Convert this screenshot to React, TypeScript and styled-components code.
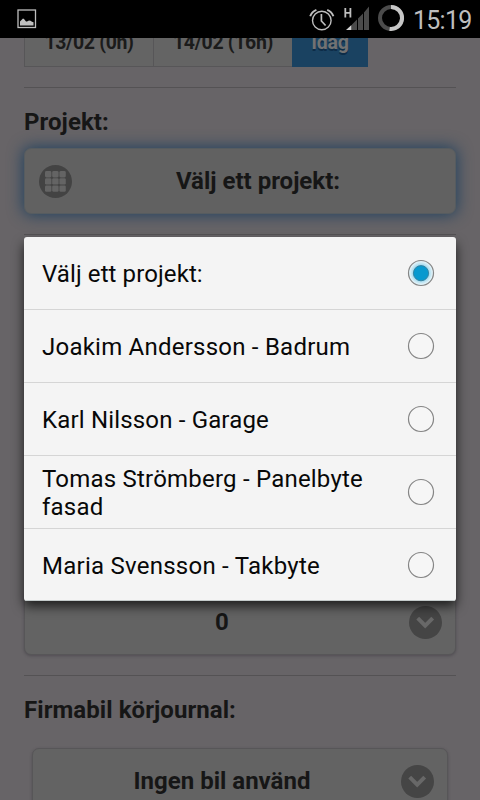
import React from "react";
import styled, { createGlobalStyle } from "styled-components";

const Global = createGlobalStyle`
  * { box-sizing: border-box; }
  html, body { margin: 0; background: #676467; }
  body { font-family: Roboto, "Liberation Sans", sans-serif; }
`;

const Screen = styled.div`
  position: relative;
  width: 480px;
  height: 800px;
  overflow: hidden;
  display: flex;
  flex-direction: column;
  background: #676467;
  color: #161616;
`;

const StatusBar = styled.header`
  flex: 0 0 38px;
  display: flex;
  align-items: center;
  justify-content: space-between;
  padding: 0 9px 0 17px;
  background: #000;
  color: #bebebe;
`;

const StatusIcons = styled.div`
  display: flex;
  align-items: center;
  svg { display: block; }
`;

const Clock = styled.span`
  margin-left: 8px;
  padding-top: 3px;
  width: 58px;
  font-size: 25px;
  line-height: 35px;
  letter-spacing: -0.75px;
  white-space: nowrap;
`;

const Page = styled.main`
  flex: 1;
  min-height: 0;
  overflow: hidden;
  padding: 0 24px;
`;

const Tabs = styled.nav`
  display: flex;
  height: 65px;
  margin-top: -36px;
`;

const Tab = styled.div<{ $width: number; $active?: boolean }>`
  width: ${(p) => p.$width}px;
  padding-top: 28px;
  text-align: center;
  font-size: 19.5px;
  line-height: 24px;
  font-weight: 700;
  letter-spacing: ${(p) => (p.$active ? "-0.2px" : "-0.35px")};
  background: ${(p) => (p.$active ? "#1a4261" : "#646464")};
  color: ${(p) => (p.$active ? "#727272" : "#1b1b1b")};
  border: solid ${(p) => (p.$active ? "#1a4261" : "#575658")};
  border-width: 1px 0 1px ${(p) => (p.$active ? "0" : "1px")};
  text-shadow: ${(p) => (p.$active ? "0 2px 0 #0d2c48" : "none")};
`;

const Divider = styled.div<{ $top: number }>`
  height: 1px;
  margin-top: ${(p) => p.$top}px;
  background: #545254;
`;

const Heading = styled.h2<{ $top: number; $spacing: number }>`
  margin: ${(p) => p.$top}px 0 0;
  height: 28px;
  font-size: 24px;
  line-height: 28px;
  font-weight: 700;
  letter-spacing: ${(p) => p.$spacing}px;
`;

const Field = styled.div<{ $top: number; $inset?: number; $focused?: boolean }>`
  display: grid;
  grid-template-columns: 48px 1fr 48px;
  align-items: center;
  height: 66px;
  margin: ${(p) => p.$top}px ${(p) => p.$inset ?? 0}px 0;
  border: 1px solid ${(p) => (p.$focused ? "#565c60" : "#575658")};
  border-radius: 7px;
  background: ${(p) => (p.$focused ? "#616161" : "#636363")};
  box-shadow: ${(p) => (p.$focused ? "0 0 15px 1px #20415f" : "0 1px 3px rgba(40, 35, 45, 0.35)")};
  svg { display: block; }
`;

const Value = styled.span<{ $left?: number; $right?: number }>`
  grid-column: 2;
  padding: 0 ${(p) => p.$right ?? 0}px 0 ${(p) => p.$left ?? 0}px;
  font-size: 24px;
  line-height: 28px;
  font-weight: 700;
  text-align: center;
  white-space: nowrap;
`;

const LeadingIcon = styled.span`
  margin-left: 14px;
`;

const TrailingIcon = styled.span`
  grid-column: 3;
  padding-left: 2px;
`;

const Dialog = styled.section`
  position: absolute;
  left: 24px;
  top: 237px;
  width: 432px;
  height: 364px;
  overflow: hidden;
  border-radius: 3px;
  background: #f4f4f4;
  color: #080808;
`;

const DialogShadow = styled.div`
  position: absolute;
  left: 24px;
  top: 239px;
  width: 432px;
  height: 362px;
  border-radius: 3px;
  box-shadow: 0 5px 12px rgba(0, 0, 0, 0.72);
`;

const Option = styled.div`
  display: flex;
  align-items: center;
  justify-content: space-between;
  height: 73px;
  padding: 1px 21px 0 18px;
  border-bottom: 1px solid #d5d5d5;
  &:last-child { height: 72px; padding-top: 2px; border-bottom-color: #c4cbcb; }
`;

const OptionText = styled.span<{ $spacing: number }>`
  width: 340px;
  font-size: 24px;
  line-height: 28px;
  letter-spacing: ${(p) => p.$spacing}px;
`;

const RadioSvg = styled.svg`
  flex: none;
  margin-top: -2px;
`;

const Radio = ({ checked }: { checked: boolean }) => (
  <RadioSvg width="28" height="28" viewBox="0 0 28 28">
    <defs>
      <radialGradient id="glow">
        <stop offset="0.6" stopColor="#9cd7ed" />
        <stop offset="0.9" stopColor="#e0f1f7" />
      </radialGradient>
    </defs>
    <circle cx="14" cy="14" r="12.5" fill={checked ? "url(#glow)" : "#f6f6f6"} stroke="#858585" strokeWidth="1.2" />
    {checked && <circle cx="14" cy="14.2" r="7.6" fill="#0799cf" stroke="#347e9b" strokeWidth="0.9" />}
  </RadioSvg>
);

const Chevron = () => (
  <svg width="33" height="33" viewBox="0 0 33 33">
    <circle cx="16.5" cy="16.5" r="16.5" fill="#454545" />
    <path d="M8.7 12.2l7.5 7.5 7.5-7.5" fill="none" stroke="#686868" strokeWidth="4" />
  </svg>
);

const cells = [6, 13.2, 20.4];
const GridIcon = () => (
  <svg width="33" height="33" viewBox="0 0 33 33">
    <circle cx="16.5" cy="16.5" r="16.5" fill="#434343" />
    {cells.flatMap((y) =>
      cells.map((x) => <rect key={`${x}-${y}`} x={x} y={y} width="6.4" height="6.4" rx="1.4" fill="#646464" />)
    )}
  </svg>
);

const PictureIcon = () => (
  <svg width="20" height="20" viewBox="0 0 20 20">
    <rect x="1" y="1" width="17.5" height="17.5" fill="none" stroke="#bebebe" strokeWidth="1.3" />
    <path d="M3 16.5v-4l2-2 1-1 1 .5 2 2.5h1l2-1 1.5.2 1.5 1 1.5.5v3.3z" fill="#c2c2c2" />
  </svg>
);

const StatusGlyphs = () => (
  <svg width="96" height="38" viewBox="309 0 96 38">
    <g fill="none" stroke="#bebebe" strokeWidth="1.4">
      <circle cx="321.8" cy="20.5" r="9.3" />
      <path d="M321.4 14v7l4.2 4.5" strokeWidth="1.7" />
      <path d="M310.2 16.2q1.5-4.5 6.2-6.4M333.4 16.2q-1.5-4.5-6.2-6.4" strokeWidth="1.9" />
    </g>
    <path d="M345.3 8v9.5M350.4 8v9.5M345.3 12.8h5.1" stroke="#bebebe" strokeWidth="1.8" />
    <path d="M351.5 25v5h-5.5z" fill="#d4d4d4" />
    <path d="M352 24.5l5-5V30h-5zM358 18.5l5-5V30h-5zM364 12.5l5-6V30h-5z" fill="#4b4b4b" />
    <circle cx="391" cy="18" r="11" fill="none" stroke="#4b4b4b" strokeWidth="4" />
    <path d="M391 7a11 11 0 1 1-1.4 21.9" fill="none" stroke="#c7c7c7" strokeWidth="4" />
  </svg>
);

const options = [
  { label: "Välj ett projekt:", spacing: 0.1 },
  { label: "Joakim Andersson - Badrum", spacing: 0.23 },
  { label: "Karl Nilsson - Garage", spacing: 0.17 },
  { label: "Tomas Strömberg - Panelbyte fasad", spacing: 0.21 },
  { label: "Maria Svensson - Takbyte", spacing: 0.25 },
];

export default function App() {
  return (
    <Screen>
      <Global />
      <StatusBar>
        <PictureIcon />
        <StatusIcons>
          <StatusGlyphs />
          <Clock>15:19</Clock>
        </StatusIcons>
      </StatusBar>
      <Page>
        <Tabs>
          <Tab $width={129}>13/02 (0h)</Tab>
          <Tab $width={139}>14/02 (16h)</Tab>
          <Tab $width={76} $active>Idag</Tab>
        </Tabs>
        <Divider $top={20} />
        <Heading $top={20} $spacing={0.05}>Projekt:</Heading>
        <Field $top={12} $focused>
          <LeadingIcon><GridIcon /></LeadingIcon>
          <Value $left={36}>Välj ett projekt:</Value>
        </Field>
        <Divider $top={20} />
        <Field $top={354}>
          <Value $right={36}>0</Value>
          <TrailingIcon><Chevron /></TrailingIcon>
        </Field>
        <Divider $top={20} />
        <Heading $top={20} $spacing={0.06}>Firmabil körjournal:</Heading>
        <Field $top={24} $inset={8}>
          <Value $right={36}>Ingen bil använd</Value>
          <TrailingIcon><Chevron /></TrailingIcon>
        </Field>
      </Page>
      <DialogShadow />
      <Dialog>
        {options.map((option, i) => (
          <Option key={option.label}>
            <OptionText $spacing={option.spacing}>{option.label}</OptionText>
            <Radio checked={i === 0} />
          </Option>
        ))}
      </Dialog>
    </Screen>
  );
}
